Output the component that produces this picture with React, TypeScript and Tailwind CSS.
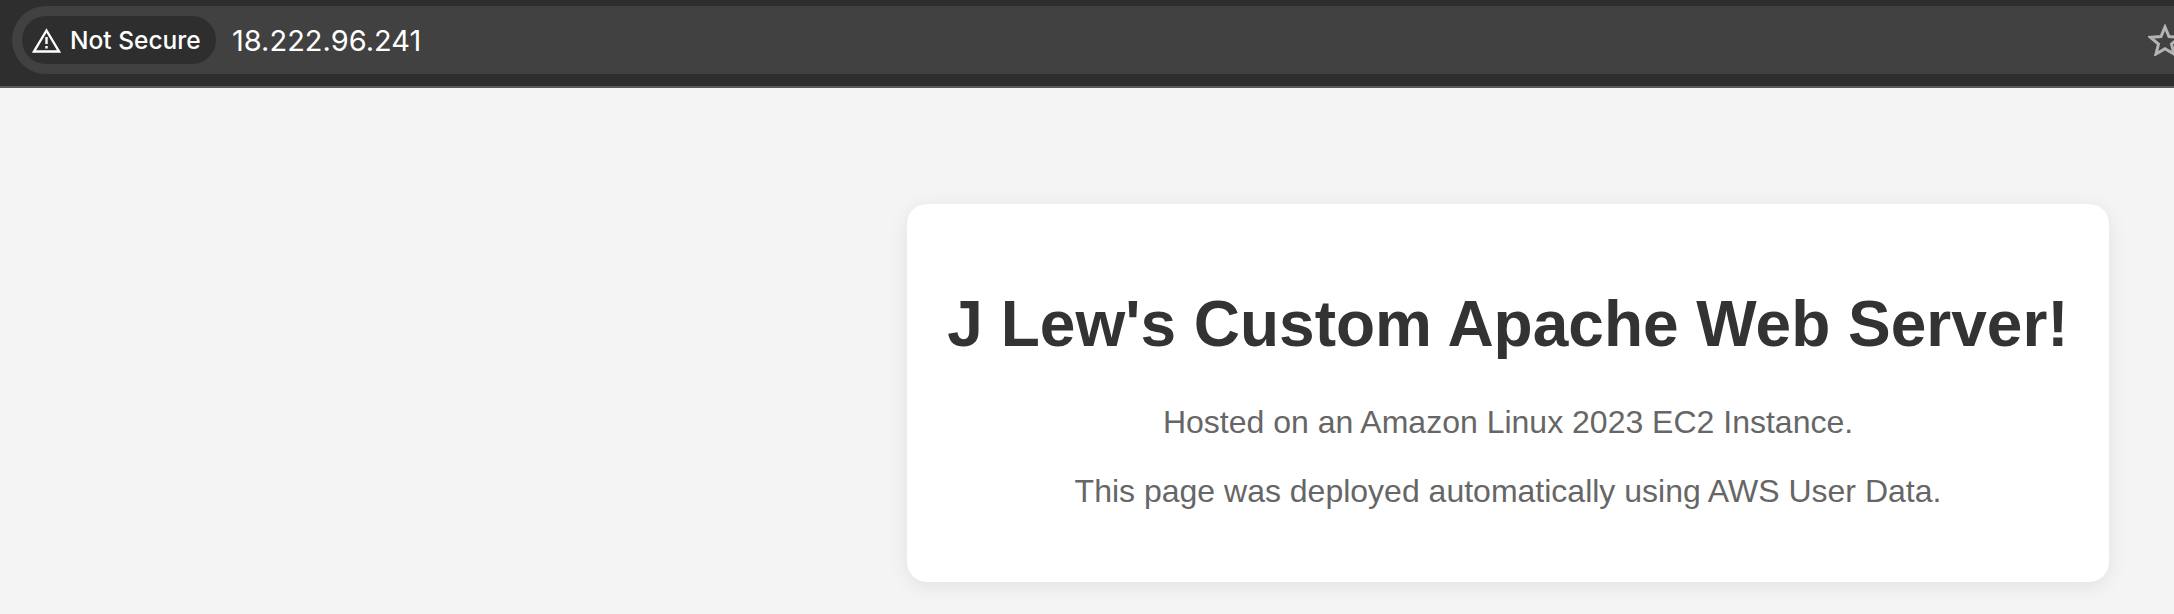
export default function App() {
  return (
    <div className="w-[2174px] h-[614px] overflow-hidden flex flex-col bg-[#f4f4f4] font-['Liberation_Sans',Arial,sans-serif]">
      <header className="h-[88px] shrink-0 bg-[#2e2e2e] border-b-2 border-[#5a5a5a] pt-[6px] pl-[12px]">
        <div className="h-[68px] w-[2200px] rounded-l-[34px] bg-[#414141] flex items-center pl-[10px]">
          <div className="h-[48px] w-[194px] rounded-[24px] bg-[#2e2e2e] flex items-center pl-[10px] gap-[9px] font-['Inter',sans-serif] text-white">
            <svg width="29" height="25" viewBox="0 0 29 25" fill="none" stroke="white" strokeWidth="2.4" strokeLinejoin="miter">
              <path d="M14.5 2.5 L27 23.5 H2 Z" />
              <path d="M14.5 9 V16" />
              <path d="M14.5 18 V20.5" />
            </svg>
            <span className="text-[24.5px] leading-none font-medium whitespace-nowrap">Not Secure</span>
          </div>
          <span className="ml-[16px] font-['Inter',sans-serif] text-[29px] leading-none text-white">18.222.96.241</span>
          <svg className="ml-[1727px] shrink-0" width="34" height="32" viewBox="0 0 34 32" fill="none" stroke="#b4b4b4" strokeWidth="3" strokeLinejoin="miter">
            <path d="M17 3 L21 12.5 L31.5 13.3 L23.5 20 L26 30 L17 24.8 L8 30 L10.5 20 L2.5 13.3 L13 12.5 Z" />
          </svg>
        </div>
      </header>
      <main className="flex-1 flex justify-end items-start pt-[116px] pr-[65px]">
        <section className="w-[1202px] h-[378px] rounded-[20px] bg-white shadow-[0_4px_20px_rgba(0,0,0,0.08)] flex flex-col items-center pt-[83px] text-center">
          <h1 className="text-[64px] leading-[74px] font-bold text-[#333333] whitespace-nowrap">J Lew's Custom Apache Web Server!</h1>
          <p className="mt-[43px] text-[32px] leading-[37px] text-[#666666] whitespace-nowrap">Hosted on an Amazon Linux 2023 EC2 Instance.</p>
          <p className="mt-[32px] text-[32px] leading-[37px] text-[#666666] whitespace-nowrap">This page was deployed automatically using AWS User Data.</p>
        </section>
      </main>
    </div>
  );
}
